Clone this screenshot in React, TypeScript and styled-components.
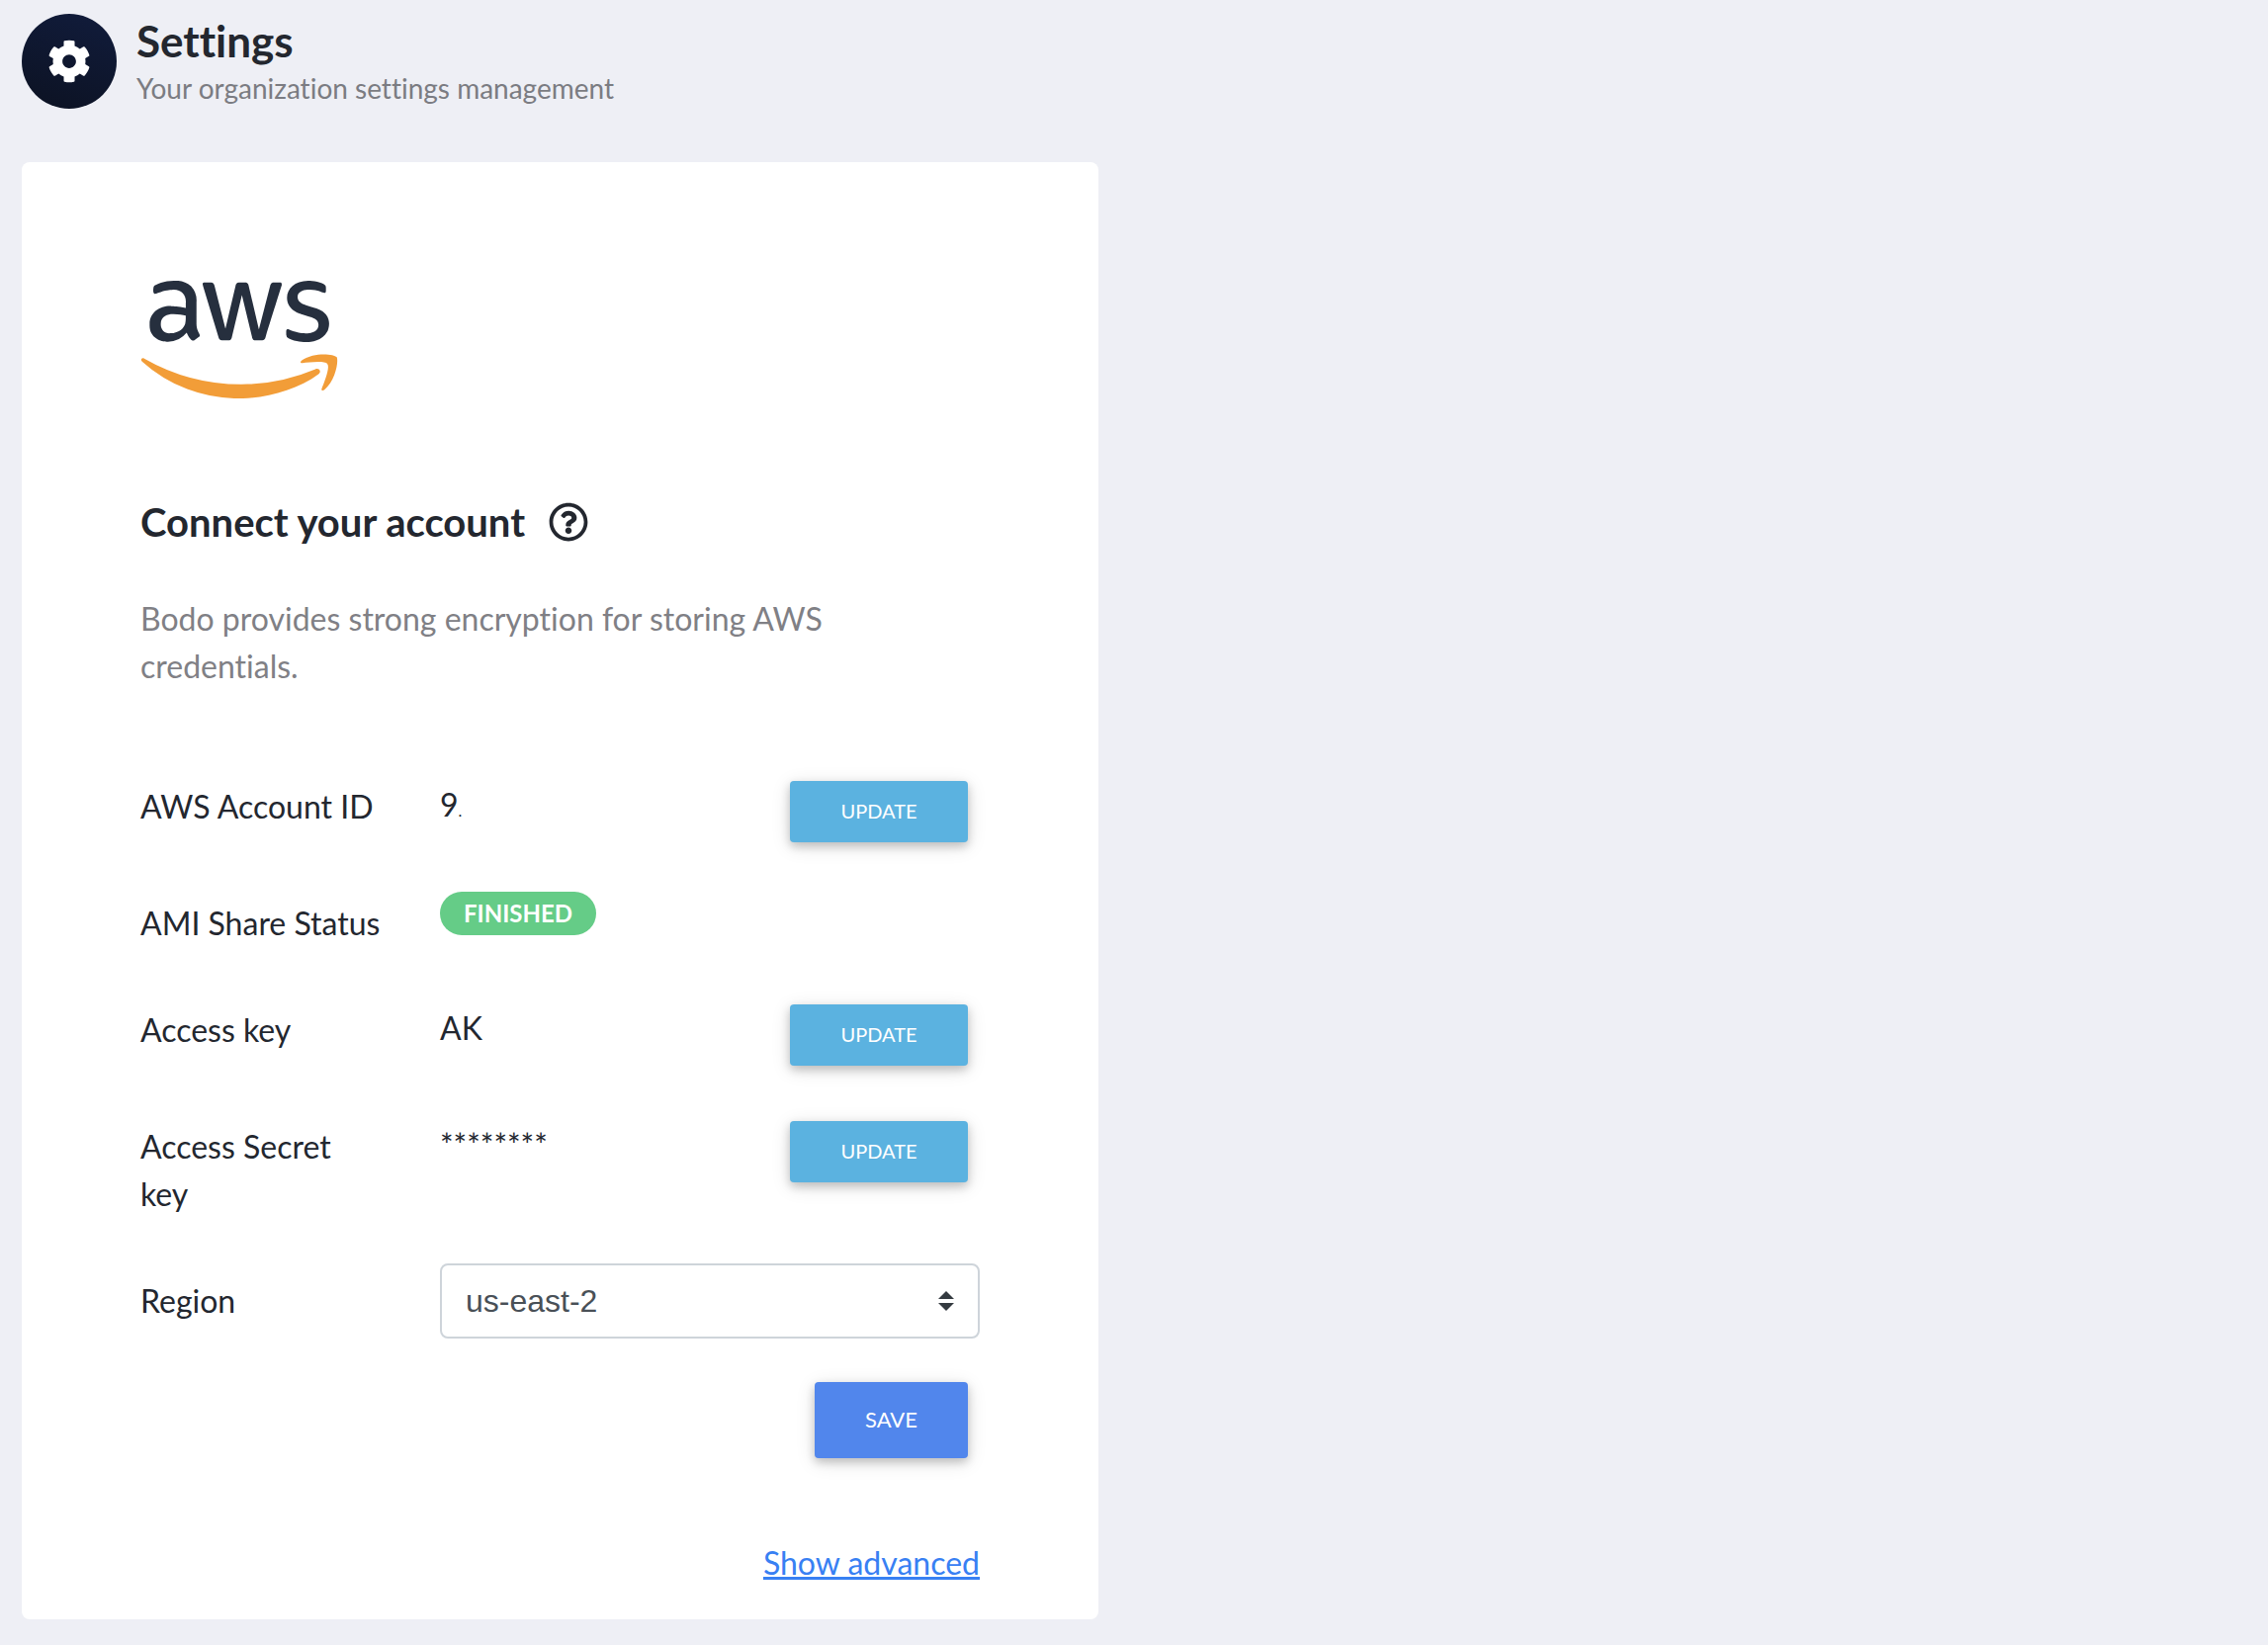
import React from "react";
import styled, { createGlobalStyle } from "styled-components";
import { FaAws, FaCog, FaRegQuestionCircle } from "react-icons/fa";

const GlobalStyle = createGlobalStyle`
  *, *::before, *::after { box-sizing: border-box; }
  body {
    margin: 0;
    background: #eeeff5;
    color: #23272f;
    font-family: Lato, "Open Sans", sans-serif;
    font-size: 32px;
    font-variant-ligatures: none;
    line-height: 48px;
  }
`;

const Page = styled.div`
  min-height: 100vh;
  padding: 14px 22px 26px;
`;

const Header = styled.header`
  display: flex;
  gap: 20px;
`;

const HeaderBadge = styled.div`
  display: flex;
  flex: none;
  align-items: center;
  justify-content: center;
  width: 96px;
  height: 96px;
  border-radius: 50%;
  background: linear-gradient(20deg, #0c1222, #111c3c);
  color: #fff;
`;

const Title = styled.h1`
  margin: 0;
  font-size: 44px;
  font-weight: 700;
  line-height: 54px;
`;

const Subtitle = styled.p`
  margin: 0;
  color: #7b7c82;
  font-size: 28px;
  line-height: 42px;
`;

const Columns = styled.main`
  display: grid;
  grid-template-columns: repeat(2, minmax(0, 1fr));
  gap: 72px;
  margin-top: 54px;
`;

const Card = styled.section`
  padding: 120px 120px 33px;
  border-radius: 8px;
  background: #fff;
`;

const LogoDefs = styled.svg`
  position: absolute;
`;

const Logo = styled(FaAws)`
  display: block;
  width: 200px;
  height: 119px;
  path { fill: url(#aws-tones); }
`;

const CardTitle = styled.h2`
  display: flex;
  align-items: center;
  gap: 24px;
  margin: 101px 0 50px;
  font-size: 40px;
  font-weight: 700;
  line-height: 48px;
`;

const Intro = styled.p`
  margin: 0 0 92px;
  color: #808085;
`;

const Row = styled.div<{ $height: number }>`
  display: grid;
  grid-template-columns: repeat(3, minmax(0, 1fr));
  align-items: start;
  column-gap: 60px;
  min-height: ${(p) => p.$height}px;
`;

const Name = styled.div<{ $top?: number }>`
  padding-top: ${(p) => p.$top ?? 2}px;
`;

const Rest = styled.span`
  font-size: 16px;
`;

const Status = styled.span`
  justify-self: start;
  padding: 0 24px;
  border-radius: 22px;
  background: #65cc87;
  color: #fff;
  font-size: 24px;
  font-weight: 700;
  line-height: 44px;
`;

const Button = styled.button<{ $primary?: boolean }>`
  justify-self: end;
  display: block;
  min-width: ${(p) => (p.$primary ? 155 : 180)}px;
  height: ${(p) => (p.$primary ? 77 : 62)}px;
  margin: 0 12px 0 0;
  padding: 0 32px 2px;
  border: 0;
  border-radius: 4px;
  background: ${(p) => (p.$primary ? "#5186ec" : "#5bb2e0")};
  box-shadow: 0 4px 10px rgba(0, 0, 0, 0.2), 0 4px 20px rgba(0, 0, 0, 0.12);
  color: #fff;
  font-family: inherit;
  font-size: ${(p) => (p.$primary ? 22 : 20)}px;
  cursor: pointer;
`;

const SelectBox = styled.div`
  display: grid;
  grid-column: span 2;
  align-items: center;
  > * { grid-area: 1 / 1; }
`;

const Select = styled.select`
  appearance: none;
  width: 100%;
  height: 76px;
  padding: 0 60px 0 24px;
  border: 2px solid #ced4da;
  border-radius: 8px;
  background: #fff;
  color: #495057;
  font-family: "Liberation Sans", Arial, sans-serif;
  font-size: 32px;
`;

const Arrows = styled.svg`
  justify-self: end;
  margin-right: 26px;
  pointer-events: none;
`;

const Actions = styled.div`
  display: flex;
  flex-direction: column;
  align-items: flex-end;
  gap: 82px;
`;

const Link = styled.a`
  color: #3880f3;
  text-decoration: underline;
`;

export default function App() {
  return (
    <Page>
      <GlobalStyle />
      <Header>
        <HeaderBadge>
          <FaCog size={44} />
        </HeaderBadge>
        <div>
          <Title>Settings</Title>
          <Subtitle>Your organization settings management</Subtitle>
        </div>
      </Header>
      <Columns>
        <Card>
          <LogoDefs width="0" height="0" aria-hidden="true">
            <linearGradient id="aws-tones" x1="0" y1="0" x2="0" y2="1">
              <stop offset="0.57" stopColor="#262f3e" />
              <stop offset="0.57" stopColor="#f29d38" />
            </linearGradient>
          </LogoDefs>
          <Logo viewBox="0 64 640 384" />
          <CardTitle>
            Connect your account
            <FaRegQuestionCircle size={40} />
          </CardTitle>
          <Intro>Bodo provides strong encryption for storing AWS credentials.</Intro>

          <Row $height={112}>
            <Name>AWS Account ID</Name>
            <div>9<Rest>.</Rest></div>
            <Button type="button">UPDATE</Button>
          </Row>
          <Row $height={114}>
            <Name $top={8}>AMI Share Status</Name>
            <Status>FINISHED</Status>
          </Row>
          <Row $height={118}>
            <Name>Access key</Name>
            <div>AK</div>
            <Button type="button">UPDATE</Button>
          </Row>
          <Row $height={144}>
            <Name>Access Secret key</Name>
            <div>********</div>
            <Button type="button">UPDATE</Button>
          </Row>
          <Row $height={120}>
            <Name as="label" htmlFor="region" $top={14}>Region</Name>
            <SelectBox>
              <Select id="region" defaultValue="us-east-2">
                <option>us-east-1</option>
                <option>us-east-2</option>
                <option>us-west-1</option>
                <option>us-west-2</option>
              </Select>
              <Arrows width="16" height="20" viewBox="0 0 4 5" aria-hidden="true">
                <path fill="#343a40" d="M2 0L0 2h4zm0 5L0 3h4z" />
              </Arrows>
            </SelectBox>
          </Row>
          <Actions>
            <Button type="button" $primary>SAVE</Button>
            <Link href="#advanced">Show advanced</Link>
          </Actions>
        </Card>
      </Columns>
    </Page>
  );
}
